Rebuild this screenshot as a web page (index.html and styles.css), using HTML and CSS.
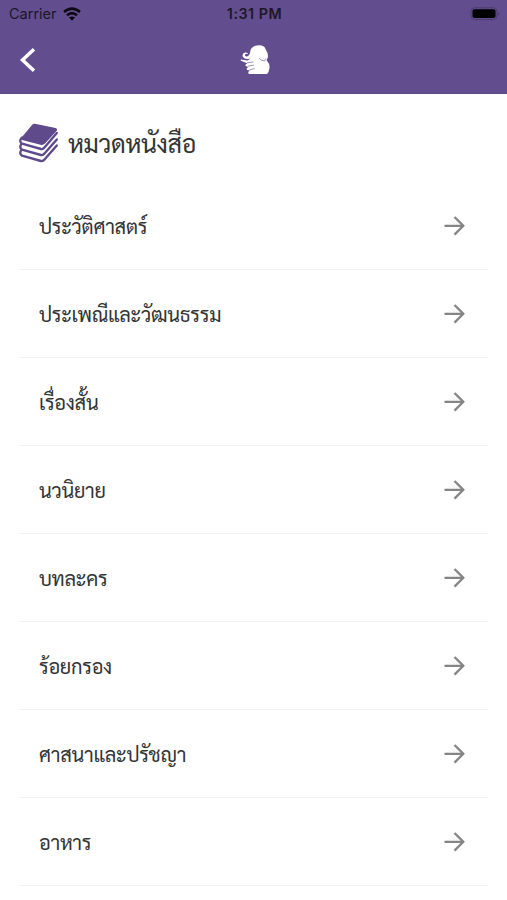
FILE: index.html
```html
<!DOCTYPE html>
<html lang="th">
<head>
<meta charset="utf-8">
<title>หมวดหนังสือ</title>
<link rel="stylesheet" href="styles.css">
</head>
<body>
<svg class="symbols" aria-hidden="true"><symbol id="arrow" viewBox="0 0 22 22"><path d="M1.500 10.800h18M11.500 2l8.800 8.800-8.800 8.800" fill="none" stroke="currentColor" stroke-width="2.300"/></symbol></svg>
<header class="header">
  <div class="status">
    <div class="carrier">Carrier
      <svg class="wifi" viewBox="0 0 18 14"><g fill="none" stroke="#0c0912" stroke-width="2.500"><path d="M1 5Q9-1.800 17 5M4 8.300Q9 4 14 8.300"/></g><path d="M6 10.600Q9 8.200 12 10.600L9 13.800Z" fill="#0c0912"/></svg>
    </div>
    <div class="time">1:31 PM</div>
    <svg class="battery" viewBox="0 0 30 14"><rect x="1" y=".8" width="26" height="11.800" rx="3.500" fill="none" stroke="#4b3b70"/><rect x="2.500" y="2.300" width="23" height="8.800" rx="1.800" fill="#000"/><path d="M28.300 5v4q1.500-2 0-4" fill="#3e315c"/></svg>
  </div>
  <nav class="bar">
    <svg class="back" viewBox="0 0 18 26"><path d="M15 2.200L3.500 13L15 23.800" fill="none" stroke="#fff" stroke-width="3.500"/></svg>
    <svg class="logo" viewBox="0 0 32 32"><path d="M11.500 6Q13 2 18 1.500Q25 .5 26.500 5Q29 9 29 12Q29 14.500 27.500 16Q31 20 30.500 24Q30 28 28 30H10Q8 28 11 26.500L8 26Q7 24 9.500 23L6.500 22Q6 20 8.500 19.500L5 18L1.500 16.500L2 15.500L8 16.500Q10 16.500 11 14.500Q6 16 4 13Q2.500 9.500 6 8.500Q8.500 8 9 10L6.500 10Q5 12 7.500 12.500Q11 12 11.500 6Z" fill="#fff"/><path d="M8 18.700l6.500-.7M9 22.200l6-1.200M10.500 26l5-1.500M20 14q1 2.500 5.500 3q1-1.500 1-2.500" fill="none" stroke="#8a78ad" stroke-width=".8"/></svg>
  </nav>
</header>
<main class="page">
  <div class="heading">
    <svg class="books" viewBox="0 0 40 40"><g fill="#fff" stroke="#5f4b8b" stroke-width="2.400" stroke-linejoin="round" stroke-linecap="round"><path d="M3 26.500Q-.5 30 3 32.700L22 38Q24 38.500 25.500 36.500L37.800 22.500"/><path d="M3 20.500Q-.5 24 3 26.700L22 32Q24 32.500 25.500 30.500L37.800 16.500"/><path d="M3 14.500Q-.5 18 3 20.700L22 26Q24 26.500 25.500 24.500L37.800 10"/></g><path d="M16 .8L36.500 5Q39 6 37.500 8L26 20.500Q24 22.500 21.500 21.800L3 17Q1.500 16 3 14L13 2Q14.300.5 16 .8Z" fill="#5f4b8b"/></svg>
    <h1>หมวดหนังสือ</h1>
  </div>
  <ul class="list">
    <li><span>ประวัติศาสตร์</span><svg><use href="#arrow"/></svg></li>
    <li><span>ประเพณีและวัฒนธรรม</span><svg><use href="#arrow"/></svg></li>
    <li><span>เรื่องสั้น</span><svg><use href="#arrow"/></svg></li>
    <li><span>นวนิยาย</span><svg><use href="#arrow"/></svg></li>
    <li><span>บทละคร</span><svg><use href="#arrow"/></svg></li>
    <li><span>ร้อยกรอง</span><svg><use href="#arrow"/></svg></li>
    <li><span>ศาสนาและปรัชญา</span><svg><use href="#arrow"/></svg></li>
    <li><span>อาหาร</span><svg><use href="#arrow"/></svg></li>
  </ul>
</main>
</body>
</html>
```
FILE: styles.css
```css
* { box-sizing: border-box; }
body { margin: 0; height: 900px; overflow: hidden; background: #fff; color: #333; font-family: "Sarabun", "Noto Sans Thai Looped", "Noto Looped Thai", "Noto Sans", sans-serif; }
svg { display: block; flex: none; }
.symbols { position: absolute; width: 0; height: 0; }
.header { height: 94px; background: #624e8e; border-bottom: 1px solid #5a4785; }
.status { height: 27px; padding: 0 7px 0 9px; display: grid; grid-template-columns: 1fr auto 1fr; align-items: center; font-family: Inter, sans-serif; font-size: 14.5px; color: #1d1628; }
.carrier { display: flex; align-items: center; gap: 6px; }
.wifi { width: 18px; height: 14px; }
.time { font-weight: 600; font-size: 14.3px; letter-spacing: .5px; }
.battery { width: 30px; height: 14px; justify-self: end; }
.bar { height: 65px; padding: 0 19px; display: grid; grid-template-columns: 1fr auto 1fr; align-items: center; }
.back { width: 18px; height: 26px; }
.logo { width: 32px; height: 32px; margin-left: 2px; }
.page { padding: 0 19px; }
.heading { height: 88px; padding-top: 9px; display: flex; align-items: center; gap: 9px; }
.books { width: 40px; height: 40px; }
h1 { margin: 0; font-size: 25px; font-weight: 400; line-height: 40px; letter-spacing: -.35px; }
.list { list-style: none; margin: 0; padding: 0; }
.list li { height: 88px; padding: 0 23px 0 20px; display: flex; align-items: center; justify-content: space-between; border-bottom: 1px solid #f2f2f2; font-size: 20px; letter-spacing: -.28px; }
.list svg { width: 22px; height: 22px; color: #858585; }
```
